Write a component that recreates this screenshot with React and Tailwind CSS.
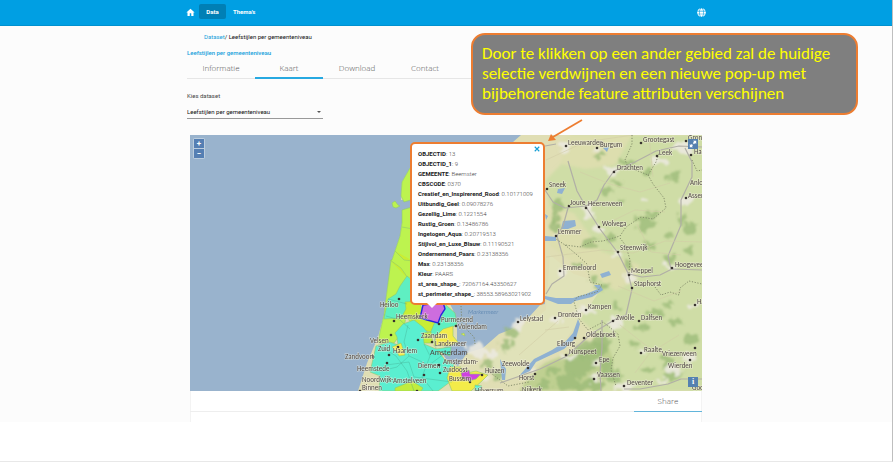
import { FaGlobe } from 'react-icons/fa';

const attributes = [
  ['OBJECTID', '13'],
  ['OBJECTID_1', '9'],
  ['GEMEENTE', 'Beemster'],
  ['CBSCODE', '0370'],
  ['Creatief_en_Inspirerend_Rood', '0.10171009'],
  ['Uitbundig_Geel', '0.09078276'],
  ['Gezellig_Lime', '0.1221554'],
  ['Rustig_Groen', '0.13486786'],
  ['Ingetogen_Aqua', '0.20719513'],
  ['Stijlvol_en_Luxe_Blauw', '0.11190521'],
  ['Ondernemend_Paars', '0.23138356'],
  ['Max', '0.23138356'],
  ['Kleur', 'PAARS'],
  ['st_area_shape_', '72067164.43350627'],
  ['st_perimeter_shape_', '38553.58963021902'],
];

// name, label x, label y, dot x, dot y
const places = [
  ['Leeuwarden', 568, 145, 566, 146],
  ['Burgum', 600, 147, 597, 148],
  ['Grootegast', 643, 142, 641, 143],
  ['Gronin', 688, 140, 686, 141],
  ['Leek', 659, 155, 657, 156],
  ['Haren', 694, 154, 691, 155],
  ['Drachten', 617, 170, 614, 172],
  ['Sneek', 549, 187, 547, 189],
  ['Anloo', 690, 185],
  ['Assen', 688, 198, 686, 198],
  ['Joure', 570, 205, 569, 206],
  ['Heerenveen', 588, 206, 586, 208],
  ['Wolvega', 602, 226, 599, 227],
  ['Lemmer', 558, 234, 556, 236],
  ['Steenwijk', 620, 250, 618, 252],
  ['Emmeloord', 563, 270, 560, 271],
  ['Meppel', 631, 273, 629, 275],
  ['Hoogeveen', 675, 267, 672, 268],
  ['Staphorst', 634, 286, 632, 288],
  ['Lelystad', 520, 321, 518, 322],
  ['Dronten', 558, 317, 555, 318],
  ['Kampen', 588, 309, 586, 310],
  ['Zwolle', 616, 320, 613, 321],
  ['Dalfsen', 641, 320, 639, 321],
  ['Hardenberg', 697, 304, 695, 305],
  ['Oldebroek', 586, 337, 584, 338],
  ['Elburg', 557, 346, 575, 338],
  ['Nunspeet', 569, 354, 566, 355],
  ['Raalte', 644, 352, 641, 353],
  ['Epe', 599, 362, 596, 363],
  ['Vriezenveen', 662, 356, 690, 360],
  ['Wierden', 668, 368, 695, 348],
  ['Vaassen', 597, 377, 594, 379],
  ['Deventer', 627, 385, 624, 386],
  ['Goor', 692, 390],
  ['Zeewolde', 502, 366, 528, 368],
  ['Horst', 519, 380, 535, 374],
  ['Nijkerk', 522, 392, 521, 392],
  ['Huizen', 485, 373, 482, 375],
  ['Hilversum', 475, 393, 470, 382],
  ['Heiloo', 380, 307, 399, 299],
  ['Heemskerk', 396, 319, 394, 321],
  ['Purmerend', 441, 322, 439, 324],
  ['Volendam', 458, 329, 456, 326],
  ['Velsen', 370, 343, 391, 335],
  ['Zaandam', 421, 338, 418, 340],
  ['Landsmeer', 435, 346, 432, 342],
  ['Zuid', 378, 351, 389, 355],
  ['Haarlem', 393, 353, 398, 347],
  ['Zandvoort', 345, 359, 373, 357],
  ['Heemstede', 357, 371, 387, 363],
  ['Diemen', 418, 368, 424, 375],
  ['Amsterdam-', 443, 364, 439, 365],
  ['Zuidoost', 443, 372, 440, 373],
  ['Noordwijk-', 362, 382],
  ['Binnen', 362, 390, 360, 391],
  ['Amstelveen', 393, 383, 417, 391],
  ['Bussum', 449, 381, 463, 378],
];

const forests = [
  [558, 205, 4, 9], [557, 218, 3, 6], [554, 225, 4, 8], [600, 156, 5, 3], [628, 163, 6, 3],
  [649, 171, 6, 4], [667, 178, 6, 3], [617, 182, 5, 3], [607, 191, 6, 4], [652, 213, 5, 3],
  [647, 224, 9, 7], [638, 219, 4, 3], [622, 202, 4, 3], [590, 243, 8, 4], [577, 265, 5, 3],
  [611, 239, 6, 3], [650, 246, 6, 4], [670, 236, 5, 3], [676, 176, 3, 7], [682, 220, 4, 5],
  [690, 229, 6, 7], [669, 258, 8, 4], [628, 263, 5, 4], [688, 250, 5, 4], [603, 287, 6, 4],
  [593, 280, 5, 2], [655, 313, 9, 4], [641, 327, 7, 3], [668, 305, 7, 3], [678, 322, 6, 4],
  [590, 351, 15, 10], [578, 366, 15, 11], [568, 382, 12, 8], [602, 344, 8, 9], [608, 367, 7, 8],
  [589, 386, 14, 5], [615, 377, 7, 6], [551, 371, 7, 4], [667, 362, 5, 8], [649, 370, 8, 3],
  [672, 375, 10, 5], [635, 344, 6, 3], [691, 340, 7, 4], [617, 306, 3, 4], [513, 333, 8, 5],
  [488, 365, 7, 3], [507, 345, 7, 5], [499, 375, 6, 5], [545, 385, 6, 4],
];

const towns = [
  [565, 147, 7, 4], [597, 149, 4, 2], [612, 171, 7, 5], [657, 160, 5, 4], [684, 148, 10, 6],
  [686, 200, 7, 6], [663, 163, 5, 3], [644, 201, 4, 3], [586, 208, 6, 3], [589, 213, 4, 5],
  [599, 229, 5, 4], [618, 253, 5, 3], [556, 237, 5, 3], [562, 272, 5, 4], [629, 277, 5, 5],
  [671, 268, 7, 4], [615, 323, 8, 6], [585, 309, 7, 4], [555, 320, 6, 4], [518, 324, 6, 6],
  [568, 357, 7, 3], [641, 352, 4, 3], [624, 387, 9, 5], [673, 368, 7, 6], [691, 358, 8, 4],
  [476, 350, 10, 6], [489, 355, 7, 5], [596, 363, 5, 4], [594, 379, 5, 4], [530, 369, 4, 3],
  [694, 306, 4, 4], [662, 381, 6, 3], [482, 376, 8, 4], [370, 389, 6, 2],
];

const HomeIcon = () => (
  <svg viewBox="0 0 24 24" className="size-[9px]" fill="currentColor">
    <path d="M10 21v-7h4v7h6v-9h3L12 2 1 12h3v9z" />
  </svg>
);

const MapCanvas = () => (
  <svg viewBox="190 135 512 256" className="block w-full" role="img" aria-label="Kaart van Nederland">
    <defs>
      <filter id="soft" x="-20%" y="-20%" width="140%" height="140%">
        <feGaussianBlur stdDeviation="1.6" />
      </filter>
      <filter id="terrain" x="-5%" y="-5%" width="110%" height="110%">
        <feTurbulence type="fractalNoise" baseFrequency="0.12" numOctaves="2" seed="4" result="noise" />
        <feDisplacementMap in="SourceGraphic" in2="noise" scale="14" xChannelSelector="R" yChannelSelector="G" />
        <feGaussianBlur stdDeviation="0.9" />
      </filter>
    </defs>
    <rect x="190" y="135" width="512" height="256" fill="#99b3cd" />

    {/* land */}
    <path d="M410 168L402 182 401 200 415 200 415 210 402 210 402 223 400 236 392 260 387 291 384 315 378 337 367 363 358 391H702V135H521L513 142 545 150V304L540 305 530 316 512 329 499 334 483 348 467 353 458 366 446 359 440 350 457 340 457 328 453 310 448 300 430 168z" fill="#e0deb4" />
    <path d="M572 135H702V391H602L599 370 603 340 580 319 577 298 598 289 585 262 565 238 550 212 546 180 568 157z" fill="#cfdda6" filter="url(#soft)" />
    <path d="M690 135H702V391H690z" fill="#cfdda6" />
    <path d="M565 135H632L615 165 586 169 561 164zM546 205L574 213 601 251 640 265 636 280 616 291 592 275 550 246z" fill="#dddeae" filter="url(#soft)" />
    <path d="M550 255L574 274 593 280 601 289 580 320 557 351 520 376 500 382 490 360 511 335 546 310z" fill="#e0e2b9" />
    <path d="M545 363L578 350 605 336 613 359 601 391H519L530 376z" fill="#bfd091" filter="url(#soft)" />

    <g filter="url(#terrain)">
      {forests.map(([x, y, rx, ry]) => (
        <ellipse key={`${x}-${y}`} cx={x} cy={y} rx={rx} ry={ry} fill="#9aba77" opacity="0.75" />
      ))}
      {towns.map(([x, y, rx, ry]) => (
        <ellipse key={`${x}-${y}`} cx={x} cy={y} rx={rx} ry={ry} fill="#ebe9df" opacity="0.9" />
      ))}
    </g>

    {/* lakes and channels */}
    <g fill="#8fb1d2">
      <path d="M545 296L556 298 573 298 586 294 598 289 594 285 600 285 603 290 592 297 575 301 571 304 558 304 545 299z" />
      <path d="M578 319L580 324 576 338 564 349 551 355 536 362 530 371 519 376 534 359 552 350 566 341 573 333z" />
      <path d="M563 221L575 220 576 226 568 229 561 229zM558 189L565 188 562 194 557 193zM600 274L609 271 611 275 602 278zM603 148L609 147 607 152z" />
      <path d="M545 214L548 216 546 220zM545 236L556 237 556 241 545 241zM500 359L506 369 505 380 502 380z" />
    </g>

    {/* roads */}
    <g fill="none" stroke="#b1afa6" strokeWidth="1.2" strokeLinejoin="round">
      <path d="M568 161L577 191 586 207 600 229 618 253 628 273 632 289 626 315 616 319 591 334 567 356 540 369 500 383" />
      <path d="M545 190L553 202 565 208 586 206 597 200 604 185 614 171 635 162 656 151 679 146 702 147" />
      <path d="M568 208L563 226 557 236 563 257 564 276 552 284 546 294M685 148L692 162 692 177 681 200 681 225 668 256 671 269M629 274L642 277 660 275 672 269 702 270" />
      <path d="M602 320L602 348 600 373 601 391M624 389L640 389 668 384 681 379 702 379M545 146L556 144M405 315L430 334 455 341M422 391L438 365 453 360" />
    </g>
    <g fill="none" stroke="#d1cda6" strokeWidth="0.6">
      <path d="M546 160L585 142 633 135M580 172L610 184 640 192 670 183M610 222L635 210 665 212M546 257L602 250 633 253 665 241 702 242M618 286L654 301 681 291M620 325L648 347 669 357M635 373L650 353 679 335M558 321L519 355M545 330L569 327M649 135L653 177M637 224L651 252 681 255" />
    </g>
    <path d="M632 135L632 144 625 160 628 167 648 175 656 162 659 153M648 175L653 184 664 198 666 208 653 219 641 217 626 227 620 236 603 241 591 242 580 247 565 245 556 239M565 245L576 254 587 264 590 282 602 285 597 292 577 297 574 302 579 319 588 330 603 322 618 334 620 346 613 358 611 370 616 386M620 238L626 246 630 260 629 273M655 287L661 295 670 292 679 295 680 288 689 281 702 284M461 306L462 325 474 337 475 344M488 371L508 386 529 382M692 160L697 171 702 170" fill="none" stroke="#7c8464" strokeWidth="0.9" strokeDasharray="1.2 1.6" />

    {/* municipalities per lifestyle colour */}
    <g stroke="#8fc96d" strokeWidth="0.6" strokeLinejoin="round">
      <path d="M410 168L402 182 401 196 404 202 414 199 420 170zM392 203L395 201 398 205 400 206 396 208 393 207zM402 210L402 223 400 236 392 260 391 260 387 291 384 315 403 314 412 300 437 295 435 200zM384 315L380 332 378 343 394 343 404 330 406 315z" fill="#bdf34f" />
      <path d="M390 260L401 268 410 281M402 227L413 229M395 251L404 260 413 261M405 300L420 303 424 316 411 322 401 313zM411 318L422 314 435 322 431 332 415 328z" fill="#c9ed34" />
      <path d="M407 276L400 286 396 294 388 299 384 319 401 318 406 309 405 302 418 301 413 281zM446 305L455 313 457 324 449 330 446 340 438 337 430 334 434 324 440 320z" fill="#5fefc2" />
      <path d="M403 324L414 320 423 327 428 333 424 344 436 349 451 347 450 356 438 351 445 360 454 364 450 382 438 391H379L380 376 370 372 376 346 390 342 398 345 397 337 395 333z" fill="#5aefd0" />
      <path d="M443 329L453 326 453 336 458 342 450 346 434 346 436 336zM392 347L401 343 405 355 399 356 397 352zM461 334L464 333 465 336zM450 367L461 367 462 374 476 371 488 375 483 380 471 391H452L447 378z" fill="#f3eb49" />
      <path d="M423 333L431 332 433 343 424 343zM395 388L412 381 423 388 421 391H395z" fill="#c1ed3d" />
      <path d="M461 373L469 370 470 374 481 374 476 379 469 381 462 378z" fill="#ce42e0" />
      <path d="M475 385L482 386 480 391H475z" fill="#5aefd0" />
    </g>
    <g fill="none" stroke="#409f87" strokeWidth="0.5" opacity="0.65">
      <path d="M378 345L396 356 407 371 414 391M408 325L404 342 409 356 429 365 444 354M424 344L430 356 422 377 433 391M386 316L400 320 410 329M388 299L407 304M386 365L409 362 414 377 452 382M409 356L397 367 381 371M436 349L434 335" />
    </g>
    <path d="M423 305L420 318 427 320 438 323 441 315 445 309 443 302z" fill="#cd6dde" stroke="#2427df" strokeWidth="1.4" />

    {/* place names */}
    <g fontFamily="Carlito, Roboto, sans-serif" fontSize="7" fill="#4f4742">
      {places.map(([name, x, y, cx, cy]) => (
        <g key={name}>
          {cx && <circle cx={cx} cy={cy} r="1.3" fill="#38342f" />}
          <text x={x} y={y} stroke="#f4f1e3" strokeWidth="1.2" strokeOpacity="0.6" paintOrder="stroke">{name}</text>
        </g>
      ))}
      <text x="430" y="355" fontSize="8">Amsterdam</text>
      <text x="468" y="314" fontSize="6" fontStyle="italic" fill="#698fb6">Markermeer</text>
    </g>
  </svg>
);

const Popup = () => (
  <div className="absolute left-[220px] top-[7px] w-[135px] rounded-[5px] border-2 border-[#ed7d31] bg-white pb-1 pl-[6px] pt-[5px]">
    <button aria-label="Sluiten" className="absolute right-[2px] top-px flex size-2 items-center justify-center text-[#159fd5]">
      <svg viewBox="0 0 8 8" className="size-[6px]" stroke="currentColor" strokeWidth="1.5">
        <path d="M1 1L7 7M7 1L1 7" />
      </svg>
    </button>
    {attributes.map(([name, value]) => (
      <p key={name} className="whitespace-nowrap text-[6px] leading-[10px] font-light text-[#444]">
        <b className="font-bold text-[#222]">{name}</b>: {value}
      </p>
    ))}
    <span className="absolute left-[15px] top-full border-x-[5px] border-t-[5px] border-x-transparent border-t-white" />
  </div>
);

const MapPanel = () => (
  <div className="mx-[3px] mt-4 border-x border-[#f3f3f3] bg-white">
    <div className="relative -mx-px">
      <MapCanvas />
      <div className="absolute left-[3px] top-[3px] flex flex-col gap-px rounded-[2px] bg-[#bccede] p-px">
        <button aria-label="Inzoomen" className="flex h-[9px] w-[10px] items-center justify-center bg-[#557fb3] text-[8px] font-bold leading-none text-white">+</button>
        <button aria-label="Uitzoomen" className="flex h-[9px] w-[10px] items-center justify-center bg-[#557fb3] text-[8px] font-bold leading-none text-white">−</button>
      </div>
      <button aria-label="Volledig scherm" className="absolute right-1 top-1 flex size-[10px] items-center justify-center bg-[#5581b0] text-white">
        <svg viewBox="0 0 10 10" className="size-[8px]" fill="currentColor">
          <path d="M5 1H9V5L7.7 3.7 6.2 5.2 4.8 3.8 6.3 2.3zM1 5V9H5L3.7 7.7 4.9 6.5 3.5 5.1 2.3 6.3z" />
        </svg>
      </button>
      <button aria-label="Informatie over kaart" className="absolute bottom-1 right-1 flex size-[10px] items-center justify-center bg-[#5581b0] font-['Liberation_Serif',serif] text-[8px] font-bold leading-none text-white">i</button>
      <Popup />
    </div>
    <div className="-mx-px flex justify-end border-b border-[#eee] font-['Open_Sans',sans-serif]">
      <button className="-mb-px h-[21px] w-[68px] border-b border-[#62b5db] text-[8px] font-light text-[#555]">Share</button>
    </div>
    <div className="h-[10px]" />
  </div>
);

const tabs = ['Informatie', 'Kaart', 'Download', 'Contact'];

const Callout = () => (
  <>
    <div className="absolute left-[284px] top-[7px] w-[387px] rounded-[14px] border-2 border-[#ed7d31] bg-[#7f7f7f] px-[9px] py-[9px] font-['Carlito','Lato',sans-serif] text-[17px] leading-5 text-[#ffff00]">
      Door te klikken op een ander gebied zal de huidige<br />
      selectie verdwijnen en een nieuwe pop-up met<br />
      bijbehorende feature attributen verschijnen
    </div>
    <svg viewBox="0 0 38 26" className="absolute left-[360px] top-[92px] z-10 w-[38px]">
      <path d="M35 2L6 19" stroke="#ed7d31" strokeWidth="1.8" />
      <path d="M1 23L4 16 9 22z" fill="#ed7d31" />
    </svg>
  </>
);

const App = () => (
  <div className="flex min-h-screen flex-col border-b border-r border-b-[#e8e8e8] border-r-[#bfbfbf] bg-white font-['Roboto',sans-serif] text-[6px] text-[#333]">
    <header className="border-b border-[#0091cf] bg-[#009fe3] text-white">
      <nav className="mx-auto flex h-[25px] w-full max-w-[520px] items-center">
        <a href="#home" aria-label="Home" className="mr-1"><HomeIcon /></a>
        <a href="#data" className="mb-[2px] flex h-[15px] w-[27px] items-center justify-center rounded-[2px] bg-[#007fb5] font-bold">Data</a>
        <a href="#themas" className="mb-[2px] ml-[7px] font-bold">Thema's</a>
        <button aria-label="Taal" className="ml-auto text-white">
          <FaGlobe className="size-[9px]" />
        </button>
      </nav>
    </header>

    <main className="bg-[#fcfcfc]">
      <div className="relative mx-auto w-full max-w-[518px]">
        <p className="pl-[17px] pt-[7px] leading-[8px] text-[#111]"><a href="#dataset" className="text-[#159fdb]">Dataset</a>/ Leefstijlen per gemeenteniveau</p>
        <h1 className="mt-2 leading-[8px] font-medium text-[#159fdb]">Leefstijlen per gemeenteniveau</h1>
        <div role="tablist" className="mt-px flex border-b border-[#e6e6e6] font-['Open_Sans',sans-serif] text-[8px] font-light text-[#555]">
          {tabs.map((tab) => (
            <button
              key={tab}
              role="tab"
              aria-selected={tab === 'Kaart'}
              className={`-mb-px h-[21px] w-[68px] border-b-2 ${tab === 'Kaart' ? 'border-[#27a9e1]' : 'border-transparent'}`}
            >
              {tab}
            </button>
          ))}
        </div>
        <label htmlFor="dataset" className="mt-[13px] block leading-[8px] text-[#444]">Kies dataset</label>
        <div className="relative mt-[5px] w-[136px]">
          <select id="dataset" className="block h-[14px] w-full appearance-none border-b border-[#999] bg-transparent text-[#111]">
            <option>Leefstijlen per gemeenteniveau</option>
          </select>
          <span className="pointer-events-none absolute right-[2px] top-[6px] border-x-2 border-t-2 border-x-transparent border-t-[#555]" />
        </div>
        <MapPanel />
        <Callout />
      </div>
    </main>
  </div>
);

export default App;
